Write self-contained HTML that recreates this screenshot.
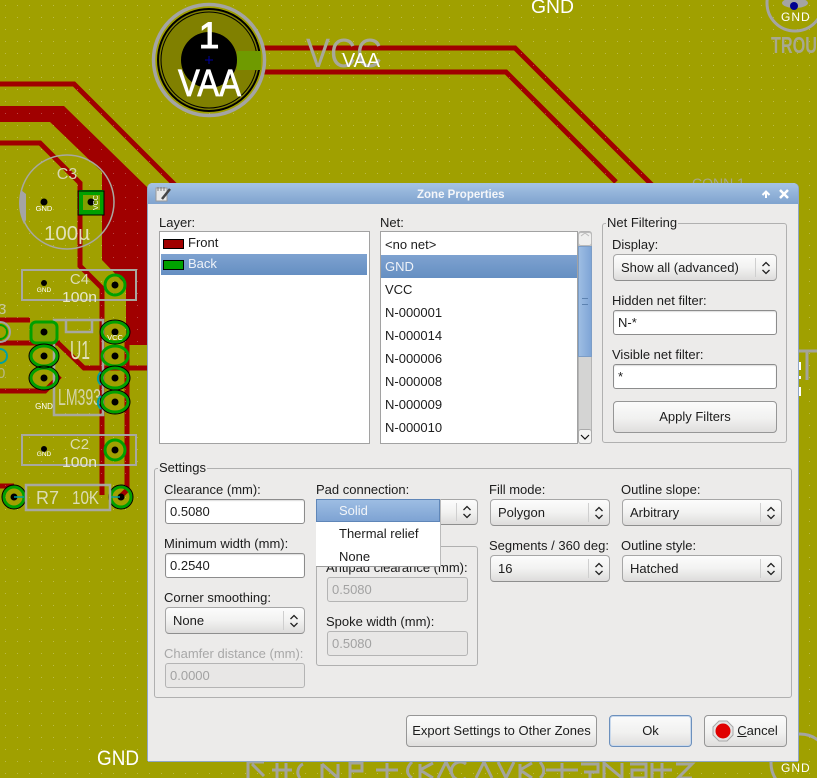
<!DOCTYPE html>
<html><head><meta charset="utf-8"><title>Zone Properties</title>
<style>
html,body{margin:0;padding:0;width:817px;height:778px;overflow:hidden;background:#a0a000}
body{position:relative;font-family:"Liberation Sans",sans-serif;font-size:13px;color:#1c1c1c}
svg.b{position:absolute;left:0;top:0}
#d{position:absolute;left:148px;top:183px;width:650px;height:578px;background:#ecebea;border-radius:5px 5px 0 0;box-shadow:0 1px 0 #8fa6c6,1px 0 0 #8fa6c6,-1px 0 0 #8fa6c6}
#t{position:absolute;left:148px;top:183px;width:650px;height:21px;border-radius:5px 5px 0 0;background:linear-gradient(#a6c3e3,#7fa3cf);color:#f4f6f9;font-weight:bold;font-size:11.500px;line-height:24px;text-indent:269px}
.a{position:absolute;white-space:nowrap}
.l{position:absolute;white-space:nowrap;line-height:15px}
.dis{color:#a8a8a8}
.box{position:absolute;box-sizing:border-box;background:#fff;border:1px solid #a2a2a2}
.i{position:absolute;box-sizing:border-box;background:#fff;border:1px solid #8c8c8c;border-radius:3px;padding-left:4px;box-shadow:inset 0 1px 1px #ddd}
.i.off{background:#e8e7e6;border-color:#b4b4b4;color:#a2a2a2;box-shadow:none}
.c{position:absolute;box-sizing:border-box;border:1px solid #a6a6a6;border-bottom-color:#8e8e8e;border-radius:4px;background:linear-gradient(#fcfcfc 0%,#f2f2f1 50%,#dddcdb 100%);padding-left:7px}
.c i{position:absolute;right:20px;top:3px;bottom:3px;width:1px;background:#cfcfcf}
.c svg{position:absolute;right:5px;top:50%;margin-top:-7px}
.btn{position:absolute;box-sizing:border-box;border:1px solid #969696;border-radius:4px;background:linear-gradient(#fbfbfb 0%,#f1f1f0 55%,#dfdedd 100%);text-align:center}
.g{position:absolute;box-sizing:border-box;border:1px solid #b0b0b0;border-radius:3px}
.leg{position:absolute;background:#ecebea;padding:0 1px;line-height:15px;white-space:nowrap}
.row{position:absolute;left:0;right:0;height:23px;line-height:23px;padding-left:4px}
.sel{background:linear-gradient(#7ea2d0,#658fc2);color:#eef2f8}
</style></head><body>
<svg class="b" width="817" height="778" viewBox="0 0 817 778" font-family="Liberation Sans, sans-serif">
<defs><pattern id="dots" width="12" height="12" patternUnits="userSpaceOnUse"><rect x="5" y="5" width="1" height="1" fill="#fff" opacity=".28"/></pattern></defs>
<rect width="817" height="778" fill="#a0a000"/>
<g fill="none" stroke="#a00000" stroke-width="5">
<path d="M262 48H515L652 185"/><path d="M262 72H506L616 182"/>
<path d="M0 84H74L175 185"/>
<path d="M0 143H40L80 183V266L102 288V495"/><path d="M127 340V490L120 497"/>
<path d="M0 320H30"/><path d="M0 343H60"/><path d="M58 343L84 368H148"/><path d="M0 391H45L60 376"/><path d="M0 486H14"/>
</g>
<path d="M0 106H64L150 190V345H126V285L102 260V172L50 122H0Z" fill="#a00000"/>
<rect width="817" height="778" fill="url(#dots)"/>
<!-- VAA pad -->
<circle cx="209" cy="60" r="55.500" fill="none" stroke="#a4a4a4" stroke-width="3.500"/>
<circle cx="209" cy="60" r="51" fill="#808000" stroke="#000" stroke-width="2"/>
<circle cx="209" cy="60" r="48" fill="none" stroke="#000" stroke-width="1"/>
<rect x="237" y="51" width="24" height="19" fill="#6f9a00"/>
<circle cx="209" cy="60" r="28" fill="#000"/>
<path d="M205 60h8M209 56v8" stroke="#0000a0" stroke-width="1"/>
<text x="209" y="48" font-size="37" fill="#fff" text-anchor="middle" stroke="#fff" stroke-width="1">1</text>
<text x="178" y="96" font-size="38" fill="#fff" stroke="#fff" stroke-width=".8" textLength="63" lengthAdjust="spacingAndGlyphs">VAA</text>
<text x="306" y="67" font-size="41" fill="#a8a89a" textLength="76" lengthAdjust="spacingAndGlyphs">VCC</text>
<text x="342" y="67" font-size="20" fill="#fff" textLength="38" lengthAdjust="spacingAndGlyphs">VAA</text>
<text x="531" y="13" font-size="19" fill="#fff" textLength="43" lengthAdjust="spacingAndGlyphs">GND</text>
<!-- top-right -->
<circle cx="795" cy="3" r="28" fill="none" stroke="#a4a4a4" stroke-width="3"/>
<ellipse cx="795" cy="3" rx="13" ry="5" fill="#a4a4a4"/>
<circle cx="794" cy="6" r="4" fill="#000090"/>
<text x="781" y="21" font-size="12" fill="#fff" letter-spacing="1">GND</text>
<text x="771" y="53" font-size="23" font-weight="bold" fill="#a8a890" textLength="46" lengthAdjust="spacingAndGlyphs">TROU</text>
<!-- C3 -->
<circle cx="67" cy="202" r="47" fill="none" stroke="#a8a8a0" stroke-width="1.500"/>
<path d="M21 190A47 47 0 0 0 24 224L26 220V194Z" fill="#a4a4a4"/>
<text x="67" y="179" font-size="16" fill="#d8d8b0" text-anchor="middle">C3</text>
<text x="44" y="240" font-size="20" fill="#e0e0b8" textLength="46" lengthAdjust="spacingAndGlyphs">100µ</text>
<circle cx="44" cy="202" r="3.500" fill="#000"/>
<text x="44" y="211" font-size="7.500" fill="#fff" text-anchor="middle">GND</text>
<rect x="79" y="190" width="25" height="25" fill="#00a000"/><rect x="78" y="191" width="26" height="24" fill="none" stroke="#000"/><rect x="83" y="195" width="17" height="15" fill="#80a000"/>
<circle cx="91" cy="202" r="3.500" fill="#000"/>
<text x="0" y="0" font-size="7" fill="#fff" transform="translate(98,210) rotate(-90)">VCC</text>
<!-- C4 -->
<rect x="22" y="270" width="114" height="30" fill="none" stroke="#a8a8a0" stroke-width="2"/>
<text x="79.500" y="284" font-size="15" fill="#dcdcb4" text-anchor="middle">C4</text>
<text x="62" y="302" font-size="15" fill="#e8e8c8" textLength="35" lengthAdjust="spacingAndGlyphs">100n</text>
<circle cx="44" cy="283" r="3" fill="#000"/><text x="44" y="292" font-size="6.500" fill="#fff" text-anchor="middle">GND</text>
<!-- U1 -->
<path d="M54 320H103V415H54Z" fill="none" stroke="#a8a8a0" stroke-width="2.500"/>
<path d="M66 320V332H92V320" fill="none" stroke="#a8a8a0" stroke-width="2.500"/>
<text x="70" y="359" font-size="26" fill="#e0e0b8" textLength="20" lengthAdjust="spacingAndGlyphs">U1</text>
<text x="58" y="405" font-size="23" fill="#d4d4a8" textLength="43" lengthAdjust="spacingAndGlyphs">LM393</text>
<g fill="none" stroke-width="3">
<rect x="31" y="322" width="26" height="21" rx="5" fill="#80a000" stroke="#00a000"/>
<ellipse cx="44" cy="356" rx="13" ry="10" stroke="#00a000"/><ellipse cx="44" cy="378" rx="13" ry="10" stroke="#00a000"/>
<ellipse cx="115" cy="332" rx="13" ry="10" stroke="#00a000"/><ellipse cx="115" cy="356" rx="13" ry="10" stroke="#00a000"/><ellipse cx="115" cy="378" rx="13" ry="10" stroke="#00a000"/><ellipse cx="115" cy="402" rx="13" ry="10" stroke="#00a000"/>
<circle cx="115" cy="285" r="10" stroke="#00a000"/><circle cx="115" cy="450" r="10" stroke="#00a000"/><circle cx="14" cy="497" r="10" stroke="#00a000"/><circle cx="121" cy="497" r="10" stroke="#00a000"/>
</g>
<g fill="#000">
<circle cx="44" cy="332" r="3.500"/><circle cx="44" cy="356" r="3.500"/><circle cx="44" cy="378" r="3.500"/>
<circle cx="115" cy="332" r="3.500"/><circle cx="115" cy="356" r="3.500"/><circle cx="115" cy="378" r="3.500"/><circle cx="115" cy="402" r="3.500"/>
<circle cx="115" cy="285" r="3.500"/><circle cx="115" cy="450" r="3.500"/><circle cx="14" cy="497" r="3.500"/><circle cx="121" cy="497" r="3.500"/>
</g>
<g fill="none" stroke="#000" stroke-width="1">
<ellipse cx="44" cy="356" rx="15" ry="12"/><ellipse cx="44" cy="378" rx="15" ry="12"/><ellipse cx="115" cy="332" rx="15" ry="12"/><ellipse cx="115" cy="378" rx="15" ry="12"/><ellipse cx="115" cy="402" rx="15" ry="12"/>
<circle cx="14" cy="497" r="12"/><circle cx="121" cy="497" r="12"/>
</g>
<path d="M101 372A13 10 0 0 0 101 385M101 396A13 10 0 0 0 101 409" fill="none" stroke="#00a0a0" stroke-width="2"/>
<path d="M14 497h10M110 497h10" stroke="#00a0a0" stroke-width="1.500"/>
<text x="115" y="340" font-size="7.500" fill="#fff" text-anchor="middle">VCC</text>
<text x="44" y="409" font-size="8" fill="#fff" text-anchor="middle">GND</text>
<circle cx="0" cy="332" r="10" fill="none" stroke="#a4a4a4" stroke-width="2"/>
<circle cx="0" cy="332" r="7" fill="none" stroke="#00a000" stroke-width="2"/><circle cx="0" cy="356" r="7" fill="none" stroke="#00a0a0" stroke-width="2"/>
<text x="-2" y="314" font-size="15" fill="#c8c8a0">3</text><text x="-3" y="378" font-size="15" fill="#b8b880">0</text>
<!-- C2 -->
<rect x="22" y="435" width="114" height="30" fill="none" stroke="#a8a8a0" stroke-width="2"/>
<text x="79.500" y="449" font-size="15" fill="#dcdcb4" text-anchor="middle">C2</text>
<text x="62" y="467" font-size="15" fill="#e8e8c8" textLength="35" lengthAdjust="spacingAndGlyphs">100n</text>
<circle cx="44" cy="449" r="3" fill="#000"/><text x="44" y="456" font-size="6.500" fill="#fff" text-anchor="middle">GND</text>
<!-- R7 -->
<rect x="26" y="485" width="84" height="25" fill="none" stroke="#a8a8a0" stroke-width="2.500"/>
<text x="36" y="504" font-size="18" fill="#dcdcb4">R7</text><text x="72" y="504" font-size="18" fill="#dcdcb4" textLength="27" lengthAdjust="spacingAndGlyphs">10K</text>
<!-- bottom -->
<text x="97" y="765" font-size="21" fill="#fff" textLength="42" lengthAdjust="spacingAndGlyphs">GND</text>
<g fill="none" stroke="#a4a49c" stroke-width="3">
<path d="M248 778V762H264M252 764L264 776M277 763V778M286 763V778M272 770H292M303 764A9 9 0 0 0 300 778M322 764V778M322 764L338 778V764M350 778V763H362V771H350M376 770H398M387 763V778"/>
<path d="M412 762C406 768 406 774 412 778M420 764V778M420 770L433 763M420 770L433 778M438 778L446 762L454 778M466 764A9 9 0 1 0 466 778M476 778L484 762L492 778M498 762L506 778L514 762M520 764V778M520 770L532 763M520 770L532 778M540 762C545 768 545 774 540 778"/>
<path d="M546 770H578M562 763V778M581 764H598V772H584M590 772V778M604 778V763L622 778V763M630 764H646V778H632V770H646M652 763V778M662 763V778M652 770H672M676 764H692L678 778H692"/>
</g>
<circle cx="800" cy="763" r="29" fill="none" stroke="#a4a4a4" stroke-width="3"/>
<text x="781" y="772" font-size="12" fill="#fff" letter-spacing="1">GND</text>
<!-- right edge -->
<path d="M799 351H817M807 351V380" stroke="#a4a49c" stroke-width="3" fill="none"/>
<path d="M800 362v8M800 376v3M800 387v9" stroke="#fff" stroke-width="2"/>
<text x="692" y="188" font-size="14" fill="#a8a888">CONN 1</text>
</svg>

<div id="d"></div>
<div id="t">Zone Properties</div>
<svg class="b" width="817" height="778" style="pointer-events:none">
<g><rect x="156" y="188" width="11" height="13" fill="#e8e8e8" stroke="#9a9a9a"/><path d="M158 187v4M161 187v4M164 187v4" stroke="#777"/><path d="M162 199L170 189" stroke="#444" stroke-width="2.500"/></g>
<path d="M766 198V192M762.500 195L766 191.500L769.500 195" fill="none" stroke="#fff" stroke-width="2"/>
<path d="M780 190L788 198M788 190L780 198" fill="none" stroke="#fff" stroke-width="2.500"/>
</svg>

<div class="l" style="left:159px;top:215px">Layer:</div>
<div class="box" style="left:159px;top:231px;width:211px;height:213px">
 <div class="a" style="left:3px;top:7px;width:19px;height:8px;background:#a00000;border:1px solid #000"></div>
 <div class="a" style="left:28px;top:3px;line-height:15px">Front</div>
 <div class="a sel" style="left:1px;top:22px;width:206px;height:21px"></div>
 <div class="a" style="left:3px;top:28px;width:19px;height:8px;background:#00a000;border:1px solid #000"></div>
 <div class="a" style="left:28px;top:24px;line-height:15px;color:#eef2f8">Back</div>
</div>

<div class="l" style="left:380px;top:215px">Net:</div>
<div class="box" style="left:380px;top:231px;width:198px;height:213px;overflow:hidden">
 <div class="row" style="top:1px">&lt;no net&gt;</div>
 <div class="row sel" style="top:23px">GND</div>
 <div class="row" style="top:46px">VCC</div>
 <div class="row" style="top:69px">N-000001</div>
 <div class="row" style="top:92px">N-000014</div>
 <div class="row" style="top:115px">N-000006</div>
 <div class="row" style="top:138px">N-000008</div>
 <div class="row" style="top:161px">N-000009</div>
 <div class="row" style="top:184px">N-000010</div>
</div>
<div class="a" style="left:578px;top:231px;width:14px;height:213px;background:#d4d4d3;box-sizing:border-box;border:1px solid #b4b4b4;border-radius:3px"></div>
<div class="a" style="left:578px;top:232px;width:14px;height:14px;background:#efefee;border-radius:3px;border:1px solid #bbb;box-sizing:border-box;text-align:center"></div>
<div class="a" style="left:578px;top:246px;width:14px;height:111px;background:linear-gradient(90deg,#9dbde3,#7fa5d6);border:1px solid #7c9dc6;box-sizing:border-box"></div>
<div class="a" style="left:582px;top:298px;width:6px;height:7px;border-top:1px solid #5c82b0;border-bottom:1px solid #5c82b0;box-sizing:border-box"></div>
<div class="a" style="left:578px;top:429px;width:14px;height:15px;background:#f4f4f3;border-radius:3px;border:1px solid #aaa;box-sizing:border-box"></div>
<svg class="b" width="817" height="778"><path d="M581 236L585 233L589 236" fill="none" stroke="#bbb"/><path d="M581 435L585 439L589 435" fill="none" stroke="#111" stroke-width="1.200"/></svg>

<div class="g" style="left:602px;top:223px;width:185px;height:220px"></div>
<div class="leg" style="left:606px;top:215px">Net Filtering</div>
<div class="l" style="left:612px;top:237px">Display:</div>
<div class="c" style="left:613px;top:254px;width:164px;height:27px;line-height:25px">Show all (advanced)<i></i><svg width="10" height="14"><path d="M1.500 5L5 1.500L8.500 5M1.500 9L5 12.500L8.500 9" fill="none" stroke="#222" stroke-width="1.300"/></svg></div>
<div class="l" style="left:612px;top:293px">Hidden net filter:</div>
<div class="i" style="left:613px;top:310px;width:164px;height:25px;line-height:23px">N-*</div>
<div class="l" style="left:612px;top:347px">Visible net filter:</div>
<div class="i" style="left:613px;top:364px;width:164px;height:25px;line-height:23px">*</div>
<div class="btn" style="left:613px;top:401px;width:164px;height:32px;line-height:30px">Apply Filters</div>

<div class="g" style="left:154px;top:468px;width:638px;height:230px"></div>
<div class="leg" style="left:158px;top:460px">Settings</div>

<div class="l" style="left:164px;top:482px">Clearance (mm):</div>
<div class="i" style="left:165px;top:499px;width:140px;height:25px;line-height:23px">0.5080</div>
<div class="l" style="left:164px;top:536px">Minimum width (mm):</div>
<div class="i" style="left:165px;top:553px;width:140px;height:25px;line-height:23px">0.2540</div>
<div class="l" style="left:164px;top:590px">Corner smoothing:</div>
<div class="c" style="left:165px;top:607px;width:140px;height:27px;line-height:25px">None<i></i><svg width="10" height="14"><path d="M1.500 5L5 1.500L8.500 5M1.500 9L5 12.500L8.500 9" fill="none" stroke="#222" stroke-width="1.300"/></svg></div>
<div class="l dis" style="left:164px;top:646px">Chamfer distance (mm):</div>
<div class="i off" style="left:165px;top:663px;width:140px;height:25px;line-height:23px">0.0000</div>

<div class="l" style="left:316px;top:482px">Pad connection:</div>
<div class="c" style="left:316px;top:499px;width:162px;height:26px"><i></i><svg width="10" height="14"><path d="M1.500 5L5 1.500L8.500 5M1.500 9L5 12.500L8.500 9" fill="none" stroke="#222" stroke-width="1.300"/></svg></div>
<div class="g" style="left:316px;top:546px;width:162px;height:120px"></div>
<div class="l" style="left:326px;top:560px">Antipad clearance (mm):</div>
<div class="i off" style="left:327px;top:577px;width:141px;height:25px;line-height:23px">0.5080</div>
<div class="l" style="left:326px;top:614px">Spoke width (mm):</div>
<div class="i off" style="left:327px;top:631px;width:141px;height:25px;line-height:23px">0.5080</div>
<div class="a" style="left:316px;top:499px;width:125px;height:68px;background:#fff;box-sizing:border-box;border-bottom:1px solid #9a9a9a;border-right:1px solid #bbb">
 <div class="a" style="left:0;top:0;width:124px;height:23px;box-sizing:border-box;background:linear-gradient(#9dbde3,#7ea3d3);border:1px solid #5f86b8;color:#f2f5f9;padding-left:22px;line-height:21px">Solid</div>
 <div class="a" style="left:23px;top:27px;line-height:15px">Thermal relief</div>
 <div class="a" style="left:23px;top:50px;line-height:15px">None</div>
</div>

<div class="l" style="left:489px;top:482px">Fill mode:</div>
<div class="c" style="left:490px;top:499px;width:120px;height:27px;line-height:25px">Polygon<i></i><svg width="10" height="14"><path d="M1.500 5L5 1.500L8.500 5M1.500 9L5 12.500L8.500 9" fill="none" stroke="#222" stroke-width="1.300"/></svg></div>
<div class="l" style="left:489px;top:538px">Segments / 360 deg:</div>
<div class="c" style="left:490px;top:555px;width:120px;height:27px;line-height:25px">16<i></i><svg width="10" height="14"><path d="M1.500 5L5 1.500L8.500 5M1.500 9L5 12.500L8.500 9" fill="none" stroke="#222" stroke-width="1.300"/></svg></div>
<div class="l" style="left:621px;top:482px">Outline slope:</div>
<div class="c" style="left:622px;top:499px;width:160px;height:27px;line-height:25px">Arbitrary<i></i><svg width="10" height="14"><path d="M1.500 5L5 1.500L8.500 5M1.500 9L5 12.500L8.500 9" fill="none" stroke="#222" stroke-width="1.300"/></svg></div>
<div class="l" style="left:621px;top:538px">Outline style:</div>
<div class="c" style="left:622px;top:555px;width:160px;height:27px;line-height:25px">Hatched<i></i><svg width="10" height="14"><path d="M1.500 5L5 1.500L8.500 5M1.500 9L5 12.500L8.500 9" fill="none" stroke="#222" stroke-width="1.300"/></svg></div>

<div class="btn" style="left:406px;top:715px;width:191px;height:32px;line-height:30px">Export Settings to Other Zones</div>
<div class="btn" style="left:609px;top:715px;width:83px;height:32px;line-height:30px;border-color:#6c90bd;box-shadow:inset 0 0 0 1px #c9d9ec">Ok</div>
<div class="btn" style="left:704px;top:715px;width:83px;height:32px;line-height:30px;padding-left:24px"><u>C</u>ancel</div>
<svg class="b" width="817" height="778"><path d="M719 721H727L733 727V735L727 741H719L713 735V727Z" fill="#e4e4e4" stroke="#a8a8a8" stroke-width="1"/><circle cx="723" cy="731" r="7.500" fill="#e00000"/></svg>
</body></html>
